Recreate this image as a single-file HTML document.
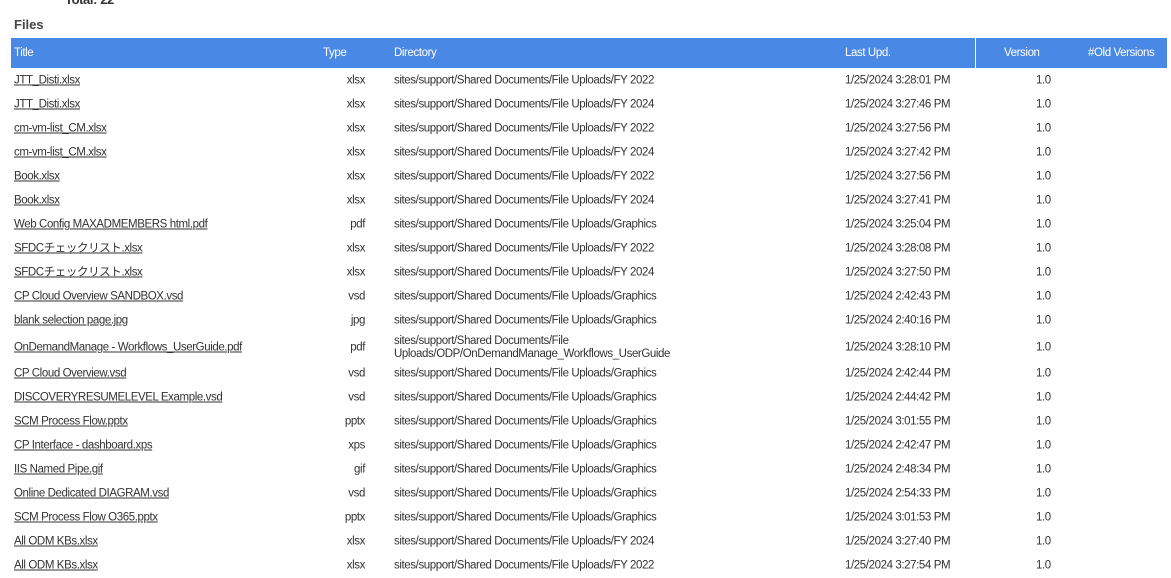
<!DOCTYPE html>
<html><head><meta charset="utf-8"><style>
body{margin:0;width:1171px;height:575px;overflow:hidden;background:#fff;font-family:"Liberation Sans","Noto Sans CJK JP",sans-serif;color:#333;font-size:11.5px;letter-spacing:-0.4px;position:relative}
.tot{position:absolute;left:65px;top:-8px;font-weight:bold;font-size:13px;color:#333}
.h{position:absolute;left:14px;top:17px;font-weight:bold;font-size:13px;color:#444;letter-spacing:0}
.hd{position:absolute;left:11px;top:38px;width:1156px;height:30px;background:#4a88e5;color:#fff}
.hd span{position:absolute;top:9px}
.hd i{position:absolute;left:964px;top:0;width:1px;height:30px;background:#fff}
.r{position:absolute;left:0;width:1171px;height:24px}
.r span{position:absolute;top:50%;transform:translateY(-50%);line-height:13px;white-space:nowrap}
.t{left:14px;text-decoration:underline;color:#333}
.y{right:806px;text-align:right}
.d{left:394px}
.u{left:845px}
.v{left:1036px}
</style></head><body>
<div class="tot">Total: 22</div>
<div class="h">Files</div>
<div class="hd"><span style="left:3px">Title</span><span style="left:312px">Type</span><span style="left:383px">Directory</span><span style="left:834px">Last Upd.</span><i></i><span style="left:993px">Version</span><span style="left:1077px">#Old Versions</span></div>

<div class="r" style="top:69px"><span class="t">JTT_Disti.xlsx</span><span class="y">xlsx</span><span class="d">sites/support/Shared Documents/File Uploads/FY 2022</span><span class="u">1/25/2024 3:28:01 PM</span><span class="v">1.0</span></div>
<div class="r" style="top:93px"><span class="t">JTT_Disti.xlsx</span><span class="y">xlsx</span><span class="d">sites/support/Shared Documents/File Uploads/FY 2024</span><span class="u">1/25/2024 3:27:46 PM</span><span class="v">1.0</span></div>
<div class="r" style="top:117px"><span class="t">cm-vm-list_CM.xlsx</span><span class="y">xlsx</span><span class="d">sites/support/Shared Documents/File Uploads/FY 2022</span><span class="u">1/25/2024 3:27:56 PM</span><span class="v">1.0</span></div>
<div class="r" style="top:141px"><span class="t">cm-vm-list_CM.xlsx</span><span class="y">xlsx</span><span class="d">sites/support/Shared Documents/File Uploads/FY 2024</span><span class="u">1/25/2024 3:27:42 PM</span><span class="v">1.0</span></div>
<div class="r" style="top:165px"><span class="t">Book.xlsx</span><span class="y">xlsx</span><span class="d">sites/support/Shared Documents/File Uploads/FY 2022</span><span class="u">1/25/2024 3:27:56 PM</span><span class="v">1.0</span></div>
<div class="r" style="top:189px"><span class="t">Book.xlsx</span><span class="y">xlsx</span><span class="d">sites/support/Shared Documents/File Uploads/FY 2024</span><span class="u">1/25/2024 3:27:41 PM</span><span class="v">1.0</span></div>
<div class="r" style="top:213px"><span class="t">Web Config MAXADMEMBERS html.pdf</span><span class="y">pdf</span><span class="d">sites/support/Shared Documents/File Uploads/Graphics</span><span class="u">1/25/2024 3:25:04 PM</span><span class="v">1.0</span></div>
<div class="r" style="top:237px"><span class="t">SFDCチェックリスト.xlsx</span><span class="y">xlsx</span><span class="d">sites/support/Shared Documents/File Uploads/FY 2022</span><span class="u">1/25/2024 3:28:08 PM</span><span class="v">1.0</span></div>
<div class="r" style="top:261px"><span class="t">SFDCチェックリスト.xlsx</span><span class="y">xlsx</span><span class="d">sites/support/Shared Documents/File Uploads/FY 2024</span><span class="u">1/25/2024 3:27:50 PM</span><span class="v">1.0</span></div>
<div class="r" style="top:285px"><span class="t">CP Cloud Overview SANDBOX.vsd</span><span class="y">vsd</span><span class="d">sites/support/Shared Documents/File Uploads/Graphics</span><span class="u">1/25/2024 2:42:43 PM</span><span class="v">1.0</span></div>
<div class="r" style="top:309px"><span class="t">blank selection page.jpg</span><span class="y">jpg</span><span class="d">sites/support/Shared Documents/File Uploads/Graphics</span><span class="u">1/25/2024 2:40:16 PM</span><span class="v">1.0</span></div>
<div class="r" style="top:333px;height:30px"><span class="t">OnDemandManage - Workflows_UserGuide.pdf</span><span class="y">pdf</span><span class="d">sites/support/Shared Documents/File<br>Uploads/ODP/OnDemandManage_Workflows_UserGuide</span><span class="u">1/25/2024 3:28:10 PM</span><span class="v">1.0</span></div>
<div class="r" style="top:362px"><span class="t">CP Cloud Overview.vsd</span><span class="y">vsd</span><span class="d">sites/support/Shared Documents/File Uploads/Graphics</span><span class="u">1/25/2024 2:42:44 PM</span><span class="v">1.0</span></div>
<div class="r" style="top:386px"><span class="t">DISCOVERYRESUMELEVEL Example.vsd</span><span class="y">vsd</span><span class="d">sites/support/Shared Documents/File Uploads/Graphics</span><span class="u">1/25/2024 2:44:42 PM</span><span class="v">1.0</span></div>
<div class="r" style="top:410px"><span class="t">SCM Process Flow.pptx</span><span class="y">pptx</span><span class="d">sites/support/Shared Documents/File Uploads/Graphics</span><span class="u">1/25/2024 3:01:55 PM</span><span class="v">1.0</span></div>
<div class="r" style="top:434px"><span class="t">CP Interface - dashboard.xps</span><span class="y">xps</span><span class="d">sites/support/Shared Documents/File Uploads/Graphics</span><span class="u">1/25/2024 2:42:47 PM</span><span class="v">1.0</span></div>
<div class="r" style="top:458px"><span class="t">IIS Named Pipe.gif</span><span class="y">gif</span><span class="d">sites/support/Shared Documents/File Uploads/Graphics</span><span class="u">1/25/2024 2:48:34 PM</span><span class="v">1.0</span></div>
<div class="r" style="top:482px"><span class="t">Online Dedicated DIAGRAM.vsd</span><span class="y">vsd</span><span class="d">sites/support/Shared Documents/File Uploads/Graphics</span><span class="u">1/25/2024 2:54:33 PM</span><span class="v">1.0</span></div>
<div class="r" style="top:506px"><span class="t">SCM Process Flow O365.pptx</span><span class="y">pptx</span><span class="d">sites/support/Shared Documents/File Uploads/Graphics</span><span class="u">1/25/2024 3:01:53 PM</span><span class="v">1.0</span></div>
<div class="r" style="top:530px"><span class="t">All ODM KBs.xlsx</span><span class="y">xlsx</span><span class="d">sites/support/Shared Documents/File Uploads/FY 2024</span><span class="u">1/25/2024 3:27:40 PM</span><span class="v">1.0</span></div>
<div class="r" style="top:554px"><span class="t">All ODM KBs.xlsx</span><span class="y">xlsx</span><span class="d">sites/support/Shared Documents/File Uploads/FY 2022</span><span class="u">1/25/2024 3:27:54 PM</span><span class="v">1.0</span></div>
</body></html>
